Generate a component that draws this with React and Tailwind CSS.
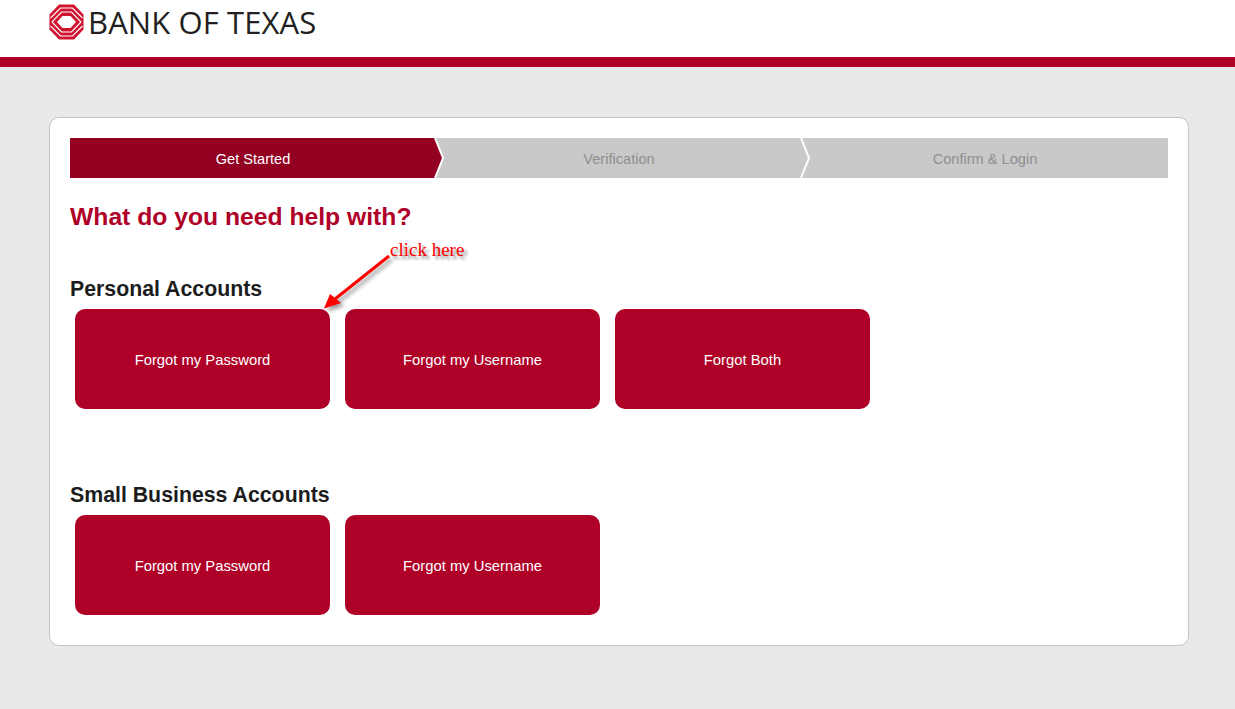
const steps = [
  { label: 'Get Started', active: true },
  { label: 'Verification' },
  { label: 'Confirm & Login', last: true },
];

function Logo() {
  return (
    <div className="flex items-center h-[38px] ml-[49px] mt-[3px]">
      <svg width="35" height="36" viewBox="0 0 35 36" className="shrink-0">
        <polygon points="10,0.5 25,0.5 34.5,10.5 34.5,25.5 25,35.5 10,35.5 0.5,25.5 0.5,10.5" fill="#d0122f" />
        <g fill="none" stroke="#fff" strokeWidth="1.1">
          <polyline points="1.5,14 11.5,4 23.5,4 33.5,14" />
          <polyline points="3,18 12.5,8 22.5,8 32,18" />
          <polyline points="1.5,22 11.5,32 23.5,32 33.5,22" />
          <polyline points="3,18 12.5,28 22.5,28 32,18" />
        </g>
        <polygon points="8,18 13.5,12 21.5,12 27,18 21.5,24 13.5,24" fill="#fff" />
      </svg>
      <span className="ml-[4px] font-['Open_Sans',sans-serif] font-medium text-[31px] leading-none tracking-[0.1px] text-[#231f20]">BANK OF TEXAS</span>
    </div>
  );
}

function Stepper() {
  return (
    <div className="flex h-10">
      {steps.map((s) => (
        <div key={s.label} className={`relative flex-1 flex items-center justify-center pt-[3px] text-[14.6px] ${s.active ? 'bg-[#930021] text-white z-10' : 'bg-[#c9c9c9] text-[#8f8f8f]'}`}>
          {s.label}
          {!s.last && (
            <svg width="11" height="40" viewBox="0 0 11 40" className="absolute top-0 right-[-9px] z-10">
              <polygon points="0,0 1,0 9,20 1,40 0,40" fill={s.active ? '#930021' : '#c9c9c9'} />
              <polyline points="1,0 9,20 1,40" fill="none" stroke="#fff" strokeWidth="2" />
            </svg>
          )}
        </div>
      ))}
    </div>
  );
}

function HelpButton({ children }) {
  return (
    <button className="w-[255px] h-[100px] rounded-[10px] bg-[#af0028] pt-[2px] text-white text-[14.8px]">{children}</button>
  );
}

function Annotation() {
  return (
    <div className="absolute left-[270px] top-[119px] w-[200px] h-[90px] pointer-events-none">
      <svg width="90" height="80" viewBox="0 0 90 80" className="absolute left-0 top-0 drop-shadow-[3px_3px_2px_rgba(0,0,0,0.4)]">
        <line x1="69" y1="19" x2="15" y2="62" stroke="#ff0000" strokeWidth="3" />
        <polygon points="4,71.5 10,57 21,66" fill="#ff0000" />
      </svg>
      <span className="absolute left-[70px] top-[2px] font-['Liberation_Serif',serif] text-[19px] leading-[22px] text-[#ff0000] [text-shadow:3px_3px_3px_rgba(0,0,0,0.45)]">click here</span>
    </div>
  );
}

export default function App() {
  return (
    <div className="min-h-[709px] bg-[#e9e9e9] font-['Liberation_Sans',sans-serif] overflow-hidden">
      <header className="bg-white h-[57px] overflow-hidden">
        <Logo />
      </header>
      <div className="h-[10px] bg-[#af0028]" />
      <main className="relative mr-[46px] mt-[50px] ml-[49px] h-[529px] rounded-[10px] border border-[#c4c4c4] bg-white p-5">
        <Stepper />
        <h1 className="mt-[24px] text-[24.7px] leading-[30px] font-bold text-[#af0028]">What do you need help with?</h1>
        <h2 className="mt-[43px] text-[21.3px] leading-[28px] font-bold text-[#1c1c1c]">Personal Accounts</h2>
        <div className="mt-[6px] ml-[5px] flex gap-[15px]">
          <HelpButton>Forgot my Password</HelpButton>
          <HelpButton>Forgot my Username</HelpButton>
          <HelpButton>Forgot Both</HelpButton>
        </div>
        <h2 className="mt-[72px] text-[21.3px] leading-[28px] font-bold text-[#1c1c1c]">Small Business Accounts</h2>
        <div className="mt-[6px] ml-[5px] flex gap-[15px]">
          <HelpButton>Forgot my Password</HelpButton>
          <HelpButton>Forgot my Username</HelpButton>
        </div>
        <Annotation />
      </main>
    </div>
  );
}
